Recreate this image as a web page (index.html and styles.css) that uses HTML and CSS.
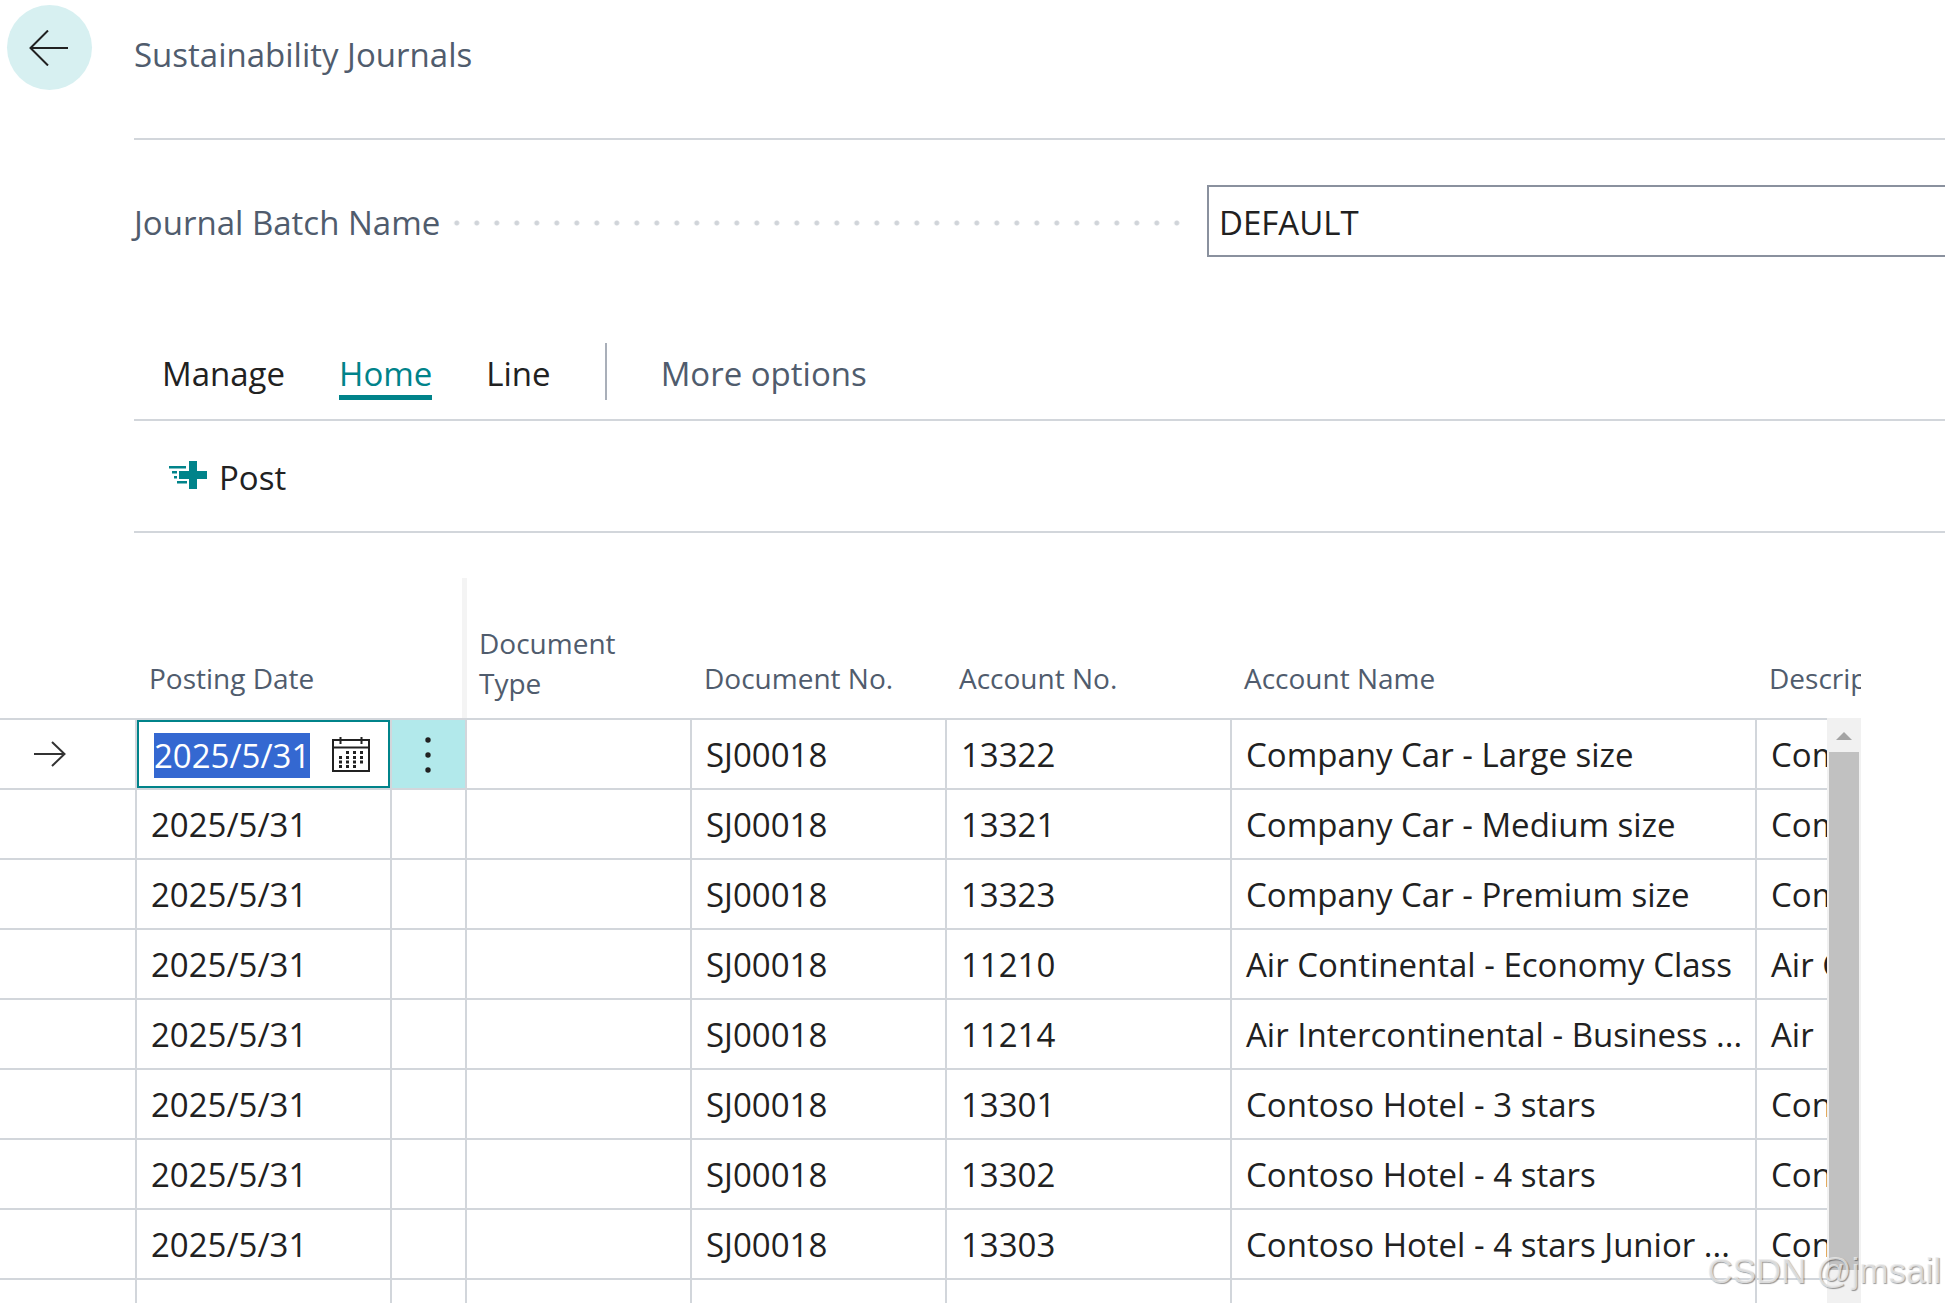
FILE: index.html
```html
<!DOCTYPE html>
<html lang="en">
<head>
<meta charset="utf-8">
<title>Sustainability Journals</title>
<link rel="stylesheet" href="styles.css">
</head>
<body>
<main class="page">
  <header class="page-header">
    <button class="back" type="button" aria-label="Back">
      <svg width="40" height="36" viewBox="0 0 40 36" fill="none" stroke="#212121" stroke-width="2"><path d="M39 18H1M19 0.500L1.500 18L19 35.500"/></svg>
    </button>
    <h1 class="title">Sustainability Journals</h1>
  </header>

  <div class="field">
    <div class="field-caption">
      <label for="batch">Journal Batch Name</label>
      <span class="leader"></span>
    </div>
    <input class="batch" id="batch" type="text" value="DEFAULT">
  </div>

  <nav class="tabs">
    <button class="tab" type="button">Manage</button>
    <button class="tab tab-active" type="button">Home</button>
    <button class="tab" type="button">Line</button>
    <span class="divider"></span>
    <button class="tab tab-more" type="button">More options</button>
  </nav>

  <div class="actions">
    <button class="post" type="button">
      <svg width="38" height="28" viewBox="0 0 38 28" fill="#00838a"><path d="M20 0h8v10h10v8H28v10h-8V18H10v-8h10zM0 5h17v2.500H0zM3 10h5v2.500H3zM5 15h3v2.500H5zM8 20h10v2.500H8z"/></svg>
      <span>Post</span>
    </button>
  </div>

  <section class="lines">
    <table class="grid">
      <colgroup>
        <col class="c-mark"><col class="c-date"><col class="c-menu"><col class="c-type">
        <col class="c-doc"><col class="c-acct"><col class="c-name"><col>
      </colgroup>
      <thead>
        <tr>
          <th></th><th>Posting Date</th><th class="freeze"></th><th class="wraps">Document Type</th>
          <th>Document No.</th><th>Account No.</th><th>Account Name</th><th>Description</th>
        </tr>
      </thead>
      <tbody>
        <tr>
          <td class="mark"><svg width="32" height="26" viewBox="0 0 32 26" fill="none" stroke="#333" stroke-width="2"><path d="M0 13H31M18 1L30.500 13L18 25"/></svg></td>
          <td class="edit">
            <div class="editor">
              <input class="date" id="date" type="text" value="2025/5/31" aria-label="Posting Date">
              <button class="icon" type="button" aria-label="Choose date">
                <svg width="38" height="36" viewBox="0 0 38 36" fill="none" stroke="#212121" stroke-width="2"><path d="M1 3h36v31H1zM1 10.500h36M8.500 0v7M29.500 0v7"/><path stroke-width="3" stroke-dasharray="3 4" d="M14 15.500h18M7 20.500h24M7 25h24M7 29.500h17"/></svg>
              </button>
            </div>
          </td>
          <td class="menu"><button class="icon" type="button" aria-label="Row actions"><svg width="6" height="36" viewBox="0 0 6 36" fill="#212121"><circle cx="3" cy="3" r="2.700"/><circle cx="3" cy="18" r="2.700"/><circle cx="3" cy="33" r="2.700"/></svg></button></td>
          <td></td><td>SJ00018</td><td>13322</td><td>Company Car - Large size</td><td>Company Car - Large size</td>
        </tr>
        <tr><td></td><td>2025/5/31</td><td></td><td></td><td>SJ00018</td><td>13321</td><td>Company Car - Medium size</td><td>Company Car - Medium size</td></tr>
        <tr><td></td><td>2025/5/31</td><td></td><td></td><td>SJ00018</td><td>13323</td><td>Company Car - Premium size</td><td>Company Car - Premium size</td></tr>
        <tr><td></td><td>2025/5/31</td><td></td><td></td><td>SJ00018</td><td>11210</td><td>Air Continental - Economy Class</td><td>Air Continental - Economy Class</td></tr>
        <tr><td></td><td>2025/5/31</td><td></td><td></td><td>SJ00018</td><td>11214</td><td>Air Intercontinental - Business ...</td><td>Air</td></tr>
        <tr><td></td><td>2025/5/31</td><td></td><td></td><td>SJ00018</td><td>13301</td><td>Contoso Hotel - 3 stars</td><td>Contoso Hotel - 3 stars</td></tr>
        <tr><td></td><td>2025/5/31</td><td></td><td></td><td>SJ00018</td><td>13302</td><td>Contoso Hotel - 4 stars</td><td>Contoso Hotel - 4 stars</td></tr>
        <tr><td></td><td>2025/5/31</td><td></td><td></td><td>SJ00018</td><td>13303</td><td>Contoso Hotel - 4 stars Junior ...</td><td>Contoso Hotel - 4 stars</td></tr>
        <tr><td></td><td></td><td></td><td></td><td></td><td></td><td></td><td></td></tr>
      </tbody>
    </table>
    <div class="scrollbar" aria-hidden="true">
      <svg class="arrow" width="16" height="8" viewBox="0 0 16 8" fill="#a3a3a3"><path d="M8 0L16 8H0z"/></svg>
      <div class="thumb"></div>
    </div>
  </section>
  <div class="watermark">CSDN @jmsail</div>
</main>
<script src="main.js"></script>
</body>
</html>
```
FILE: main.js
```js
const date = document.getElementById('date');
date.focus();
date.select();
```
FILE: styles.css
```css
* { box-sizing: border-box; }

body {
  margin: 0;
  background: #fff;
  color: #212121;
  font-family: "Open Sans", "Noto Sans", sans-serif;
  font-size: 33px;
  line-height: 46px;
}

button, input {
  font: inherit;
  color: inherit;
  border: 0;
  padding: 0;
  background: none;
  outline: 0;
}

.page {
  position: relative;
  display: flex;
  flex-direction: column;
  height: 100vh;
  overflow: hidden;
}

.page-header {
  display: flex;
  height: 138px;
  padding: 5px 0 0 7px;
  gap: 42px;
  flex: none;
}

.back {
  display: flex;
  align-items: center;
  justify-content: center;
  width: 85px;
  height: 85px;
  padding-right: 1px;
  border-radius: 50%;
  background: #d7f0f1;
}

.title {
  margin: 27px 0 0;
  font-size: 33px;
  font-weight: 400;
  color: #505c6d;
}

.field {
  display: flex;
  flex: none;
  margin-left: 134px;
  padding: 45px 0 63px;
  border-top: 2px solid #d2d6db;
}

.field-caption {
  display: flex;
  align-items: center;
  flex: 0 0 1073px;
  gap: 10px;
  padding: 4px 20px 0 0;
  color: #505c6d;
}

.leader {
  flex: 1;
  height: 6px;
  background: radial-gradient(circle, #d0d4d9 2px, transparent 3px) right / 20px 6px repeat-x;
}

.batch {
  flex: 1;
  min-width: 0;
  height: 72px;
  padding: 2px 10px 0;
  border: 2px solid #8a919e;
  border-right: 0;
}

.tabs {
  display: flex;
  align-items: flex-end;
  flex: none;
  height: 101px;
  margin-left: 134px;
  padding: 0 0 19px 28px;
  gap: 54px;
  border-bottom: 2px solid #d2d6db;
}

.tab {
  height: 57px;
  padding-top: 8px;
  border-bottom: 5px solid transparent;
}

.tab-active {
  color: #00838a;
  border-color: #00838a;
}

.tab-more { color: #505c6d; }

.divider {
  width: 2px;
  height: 57px;
  background: #a9afb9;
}

.actions {
  flex: none;
  height: 112px;
  margin-left: 134px;
  padding: 34px 35px;
  border-bottom: 2px solid #d2d6db;
}

.post {
  display: flex;
  gap: 12px;
}

.post svg { margin-top: 6px; }

.lines {
  position: relative;
  flex: 1;
  min-height: 0;
  margin: 45px 84px 0 0;
  overflow: hidden;
}

.grid {
  width: 100%;
  table-layout: fixed;
  border-collapse: separate;
  border-spacing: 0;
}

.c-mark { width: 135px; }
.c-date { width: 255px; }
.c-menu { width: 75px; }
.c-type { width: 225px; }
.c-doc { width: 255px; }
.c-acct { width: 285px; }
.c-name { width: 525px; }

th {
  height: 142px;
  padding: 0 0 20px 14px;
  border-bottom: 2px solid #d2d6db;
  color: #505c6d;
  font-size: 28px;
  font-weight: 400;
  line-height: 40px;
  text-align: left;
  vertical-align: bottom;
  overflow: hidden;
  background-clip: padding-box;
}

th.freeze { background-image: linear-gradient(to left, #f4f4f4 3px, transparent 3px); }

th.wraps {
  padding: 0 60px 15px 14px;
  background-image: linear-gradient(to right, #f4f4f4 2px, transparent 2px);
}

td {
  height: 70px;
  padding: 2px 0 0 14px;
  border-left: 2px solid #d2d6db;
  border-bottom: 2px solid #d2d6db;
  white-space: nowrap;
  overflow: hidden;
}

td:first-child { border-left: 0; }

td.mark { padding: 0 0 0 34px; }

.mark svg, .icon svg { display: block; }

td.edit { padding: 0; }

.editor {
  display: flex;
  align-items: center;
  justify-content: space-between;
  height: 68px;
  padding: 2px 18px 0 15px;
  border: 2px solid #00838a;
}

.date {
  width: 160px;
  height: 60px;
}

.date::selection {
  background: rgba(51, 103, 209, 0.996);
  color: #fff;
}

td.menu {
  padding: 2px 2px 0 0;
  background: #b2e9eb;
}

.menu .icon { display: block; margin: 0 auto; }

.scrollbar {
  position: absolute;
  top: 140px;
  right: 0;
  bottom: 0;
  display: flex;
  flex-direction: column;
  align-items: center;
  gap: 12px;
  width: 34px;
  padding: 14px 2px 33px;
  background: #f1f1f1;
}

.arrow { flex: none; }

.thumb {
  flex: 1;
  width: 100%;
  background: #c1c1c1;
}

.watermark {
  position: absolute;
  right: 4px;
  bottom: 9px;
  color: rgba(236, 236, 236, 0.8);
  font-family: "Liberation Sans", Arial, sans-serif;
  font-size: 35px;
  text-shadow: 1px 1px 1px rgba(0, 0, 0, 0.4);
}
```
